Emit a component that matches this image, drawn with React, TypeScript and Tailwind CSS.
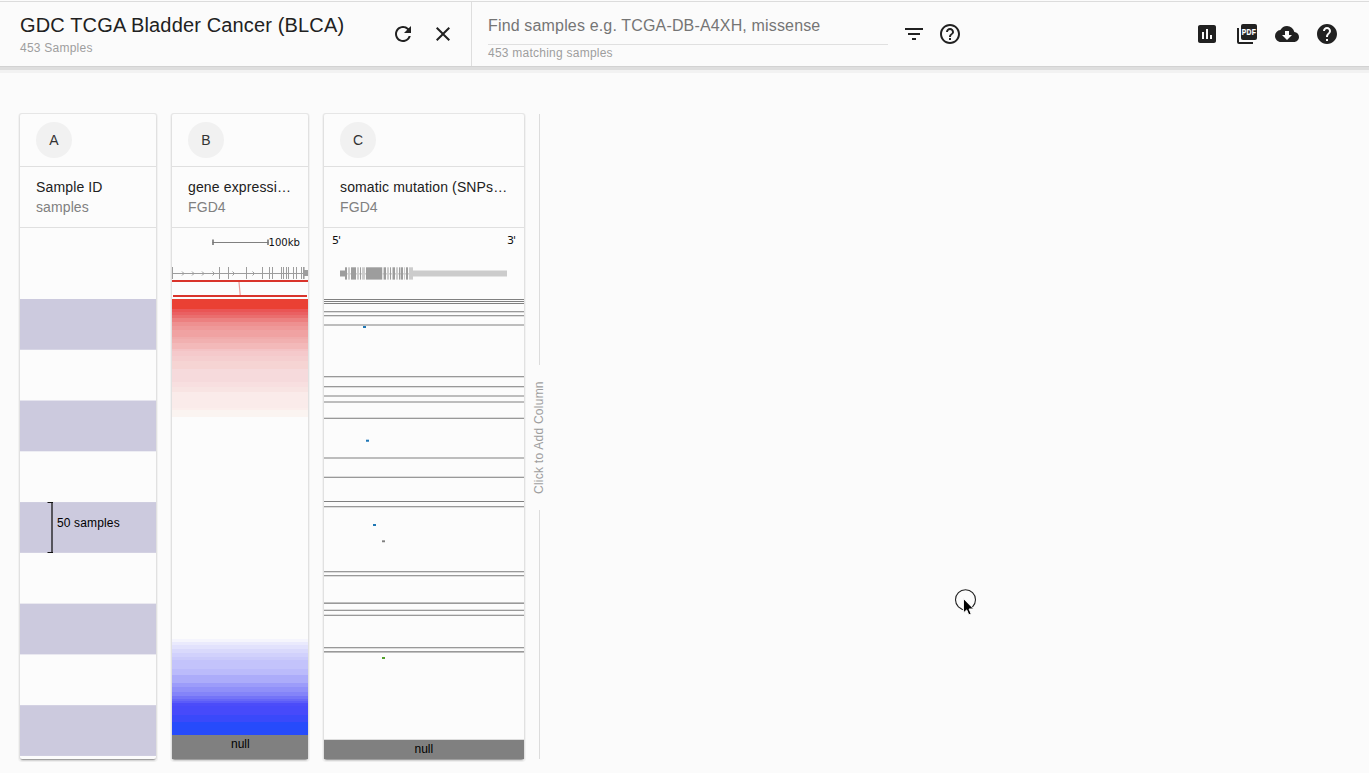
import type { ReactNode } from "react";
import {
  MdRefresh,
  MdClose,
  MdFilterList,
  MdHelpOutline,
  MdAssessment,
  MdCloudDownload,
  MdHelp,
} from "react-icons/md";

type Band = [from: number, to: number, fill: string];

const expressionBands: Band[] = [
  [71, 81, "#ea4033"],
  [81, 84, "#ea5555"],
  [84, 87, "#ea6062"],
  [87, 90, "#ea6e6e"],
  [90, 94, "#ec8080"],
  [94, 98, "#ee9090"],
  [98, 102, "#ef9999"],
  [102, 109, "#f0a2a2"],
  [109, 111, "#f0abab"],
  [111, 115, "#f1b0b0"],
  [115, 121, "#f3b9b9"],
  [121, 123, "#f4c3c5"],
  [123, 128, "#f5c9cb"],
  [128, 133, "#f5cecf"],
  [133, 141, "#f6d4d3"],
  [141, 154, "#f6dadc"],
  [154, 159, "#f8dfe0"],
  [159, 164, "#f8e4e3"],
  [164, 180, "#faebea"],
  [180, 182, "#fbeeec"],
  [182, 189, "#fbf4f1"],
  [411, 414, "#f5f5fd"],
  [414, 417, "#eaeafd"],
  [417, 421, "#e2e2fd"],
  [421, 425, "#d9d9fc"],
  [425, 429, "#d1d1fc"],
  [429, 432, "#cacafb"],
  [432, 441, "#c3c3fb"],
  [441, 447, "#bbbbfb"],
  [447, 455, "#acacfa"],
  [455, 459, "#9c9cfa"],
  [459, 464, "#9090f9"],
  [464, 468, "#8484f9"],
  [468, 471, "#7474f8"],
  [471, 473, "#6767f8"],
  [473, 475, "#5b5bf9"],
  [475, 478, "#4c4cf9"],
  [478, 487, "#474afa"],
  [487, 494, "#3a49fa"],
  [494, 507, "#264bfb"],
  [507, 531, "#808080"],
];

const expressionExons = [0, 47, 56, 74, 90, 97, 100, 109, 111, 114, 116, 121, 124, 129];
const chevrons = [10, 20, 30, 40.5, 60.5, 80.5];

const mutationExons: [x: number, width: number, fill: string][] = [
  [21, 2, "#9d9d9d"],
  [24, 2, "#cccccc"],
  [27, 5, "#9d9d9d"],
  [33, 2, "#cccccc"],
  [36, 1, "#9d9d9d"],
  [38, 3, "#cccccc"],
  [42, 16, "#9d9d9d"],
  [58, 0.7, "#dddddd"],
  [59.6, 2.4, "#9d9d9d"],
  [63, 2, "#cccccc"],
  [66, 1, "#9d9d9d"],
  [68, 1, "#cccccc"],
  [69, 2, "#9d9d9d"],
  [72, 2, "#cccccc"],
  [75, 1, "#9d9d9d"],
  [76.6, 2.4, "#9d9d9d"],
  [80, 1, "#cccccc"],
  [82, 2, "#9d9d9d"],
  [85, 4, "#cccccc"],
];

const mutationRows: [y: number, height: number, fill: string][] = [
  [71, 1, "#808080"],
  [73, 1, "#808080"],
  [75, 1, "#808080"],
  [83, 1, "#999999"],
  [84, 1, "#dddddd"],
  [87, 1, "#999999"],
  [88, 1, "#dddddd"],
  [96, 2, "#bdbdbd"],
  [148, 1, "#999999"],
  [149, 1, "#dddddd"],
  [158, 1, "#999999"],
  [159, 1, "#dddddd"],
  [167, 2, "#bdbdbd"],
  [173, 2, "#bdbdbd"],
  [189, 1, "#dddddd"],
  [190, 1, "#999999"],
  [229, 2, "#bdbdbd"],
  [248, 1, "#dddddd"],
  [249, 1, "#999999"],
  [273, 1, "#808080"],
  [278, 1, "#999999"],
  [279, 1, "#dddddd"],
  [343, 1, "#999999"],
  [344, 1, "#dddddd"],
  [347, 1, "#999999"],
  [348, 1, "#dddddd"],
  [374, 1, "#c0c0c0"],
  [375, 1, "#999999"],
  [381, 1, "#dddddd"],
  [382, 1, "#999999"],
  [386, 1, "#dddddd"],
  [387, 1, "#999999"],
  [419, 1, "#999999"],
  [420, 1, "#dddddd"],
  [423, 1, "#999999"],
  [424, 1, "#c0c0c0"],
  [511, 1, "#dddddd"],
  [512, 19, "#808080"],
];

const mutationMarks: [x: number, y: number, height: number, fill: string][] = [
  [39, 98, 2, "#1f77b4"],
  [42, 211, 1, "#b7d2e8"],
  [42, 212, 1, "#1f77b4"],
  [42, 213, 1, "#5a9acb"],
  [49, 296, 2, "#1f77b4"],
  [58, 312, 1, "#a8a8a8"],
  [58, 313, 1, "#808080"],
  [58, 314, 1, "#dddddd"],
  [58, 429, 2, "#52a02c"],
];

function PdfIcon() {
  return (
    <svg width="24" height="24" viewBox="0 0 24 24">
      <path d="M2 6h2v14h14v2H4a2 2 0 0 1-2-2z" fill="currentColor" />
      <rect x="6" y="2" width="16" height="16" rx="2" fill="currentColor" />
      <text
        transform="translate(6.8 13) scale(0.78 1)"
        fontSize="8.6"
        fontWeight="700"
        fill="#fff"
        stroke="#fff"
        strokeWidth="0.2"
        letterSpacing="0.4"
      >
        PDF
      </text>
    </svg>
  );
}

function SamplesChart() {
  return (
    <svg width="136" height="531" className="block">
      {[0, 2, 4, 6, 8].map((i) => (
        <rect key={i} x="0" y={71 + i * 50.77} width="136" height="50.77" fill="#cccade" />
      ))}
      <rect x="31" y="274" width="2" height="51" fill="#55545c" />
      <path d="M27.5 274.5H33M27.5 324.5H33" stroke="#111" fill="none" />
      <text x="37" y="299" fontSize="12" letterSpacing="0.14" fill="#000">
        50 samples
      </text>
    </svg>
  );
}

function ExpressionChart() {
  return (
    <svg width="136" height="531" className="block">
      <path d="M40.5 14.5H96.5" stroke="#808080" />
      <path d="M41 11.5V17M96 11.5V17" stroke="#777" strokeWidth="1.6" />
      <text
        x="96.5"
        y="18"
        fontSize="11"
        fontFamily="'DejaVu Sans', sans-serif"
        fill="#111"
        textLength="31.5"
        lengthAdjust="spacingAndGlyphs"
      >
        100kb
      </text>
      <path d="M0 45.5H136" stroke="#9d9d9d" />
      {expressionExons.map((x) => (
        <rect key={x} x={x} y="39" width="1" height="12" fill="#9d9d9d" />
      ))}
      <rect x="131" y="39" width="1.6" height="12" fill="#9d9d9d" />
      <rect x="132" y="42" width="4" height="6" fill="#9d9d9d" />
      {chevrons.map((x) => (
        <path key={x} d={`M${x} 43.5l2 2l-2 2`} stroke="#9d9d9d" strokeWidth="1" fill="none" />
      ))}
      <rect x="0" y="52" width="136" height="2" fill="#d9342b" />
      <path d="M67 54L68.2 67" stroke="#eb9c98" strokeWidth="1.2" />
      <rect x="1" y="67" width="134" height="2" fill="#d9342b" />
      {expressionBands.map(([from, to, fill]) => (
        <rect key={from} x="0" y={from} width="136" height={to - from} fill={fill} />
      ))}
      <text x="68.3" y="520" fontSize="12" textAnchor="middle" fill="#000">
        null
      </text>
    </svg>
  );
}

function MutationChart() {
  return (
    <svg width="200" height="531" className="block">
      <g fontSize="11" fontFamily="'DejaVu Sans', sans-serif" fill="#111">
        <text x="8" y="16" textLength="9">5'</text>
        <text x="183" y="16" textLength="9">3'</text>
      </g>
      <rect x="21" y="45" width="70" height="1.6" fill="#d4d4d4" />
      <rect x="16" y="42.5" width="5" height="6" fill="#9d9d9d" />
      <rect x="89" y="42.5" width="94" height="6" fill="#cccccc" />
      {mutationExons.map(([x, width, fill]) => (
        <rect key={x} x={x} y="39.3" width={width} height="12.3" fill={fill} />
      ))}
      {mutationRows.map(([y, height, fill]) => (
        <rect key={y} x="0" y={y} width="200" height={height} fill={fill} />
      ))}
      {mutationMarks.map(([x, y, height, fill]) => (
        <rect key={y} x={x} y={y} width="3" height={height} fill={fill} />
      ))}
      <text x="99.8" y="525" fontSize="12" textAnchor="middle" fill="#000">
        null
      </text>
    </svg>
  );
}

interface ColumnProps {
  label: string;
  title: string;
  subtitle: string;
  wide?: boolean;
  children: ReactNode;
}

function Column({ label, title, subtitle, wide, children }: ColumnProps) {
  return (
    <section
      className={`${wide ? "w-[200px]" : "w-[136px]"} shrink-0 rounded-[2px] bg-[#fcfcfc] shadow-[0_2px_2px_-1px_rgba(0,0,0,0.42),0_0_0_1px_#e6e6e6,0_1px_0_2px_#f2f2f2]`}
    >
      <div className="flex h-[53px] items-center border-b border-[#e0e0e0] px-4">
        <span className="flex size-9 items-center justify-center rounded-full bg-[#f1f1f1] text-[14px] text-[#333]">
          {label}
        </span>
      </div>
      <div className="h-[61px] border-b border-[#e0e0e0] px-4 pt-[10px] text-[14px] leading-5">
        <h2 className="tracking-[0.14px] whitespace-nowrap text-[#212121]">{title}</h2>
        <p className="tracking-[0.1px] text-[#808080]">{subtitle}</p>
      </div>
      {children}
    </section>
  );
}

export default function App() {
  return (
    <div className="h-[773px] w-[1369px] overflow-hidden bg-[#fbfbfb] pt-px font-['Liberation_Sans',Arial,sans-serif] text-[#212121]">
      <header className="flex h-[65px] border-t border-[#dcdcdc] shadow-[0_1px_0_#d2d2d2,0_4px_0_#dedede,0_7px_0_#f2f2f2]">
        <div className="flex w-[472px] shrink-0 border-r border-[#dedede] pl-5">
          <div className="w-[371px] pt-[11px]">
            <h1 className="text-[20px] leading-6 tracking-[0.15px] whitespace-nowrap">GDC TCGA Bladder Cancer (BLCA)</h1>
            <p className="mt-[3px] text-[12px] leading-4 tracking-[0.24px] text-[#9e9e9e]">453 Samples</p>
          </div>
          <div className="flex gap-4 pt-5">
            <MdRefresh size={24} />
            <MdClose size={24} />
          </div>
        </div>
        <div className="flex pl-4">
          <div className="w-[400px] pt-[11px]">
            <div className="h-8 border-b border-[#e0e0e0] pt-px text-[16px] leading-6 tracking-[0.16px] text-[#757575]">
              Find samples e.g. TCGA-DB-A4XH, missense
            </div>
            <p className="text-[12px] leading-4 tracking-[0.24px] text-[#9e9e9e]">453 matching samples</p>
          </div>
          <div className="flex gap-3 pt-5 pl-[14px]">
            <MdFilterList size={24} />
            <MdHelpOutline size={24} />
          </div>
        </div>
        <div className="ml-auto flex gap-4 pt-5 pr-[30px]">
          <MdAssessment size={24} />
          <PdfIcon />
          <MdCloudDownload size={24} />
          <MdHelp size={24} />
        </div>
      </header>

      <main className="flex items-start gap-4 pt-12 pl-5">
        <Column label="A" title="Sample ID" subtitle="samples">
          <SamplesChart />
        </Column>
        <Column label="B" title="gene expressi…" subtitle="FGD4">
          <ExpressionChart />
        </Column>
        <Column label="C" title="somatic mutation (SNPs…" subtitle="FGD4" wide>
          <MutationChart />
        </Column>
        <div className="-ml-[9px] flex h-[645px] w-4 flex-col items-center">
          <div className="h-[251px] w-px bg-[#dcdcdc]" />
          <div className="flex h-[145px] rotate-180 items-center justify-center text-[12px] leading-4 tracking-[0.25px] whitespace-nowrap text-[#9e9e9e] [writing-mode:vertical-rl]">
            Click to Add Column
          </div>
          <div className="w-px flex-1 bg-[#dcdcdc]" />
        </div>
      </main>

      <svg className="pointer-events-none absolute top-[585px] left-[950px]" width="30" height="35">
        <circle cx="15.5" cy="14.8" r="10" fill="none" stroke="#222" strokeWidth="1.1" />
        <path
          d="M13.4 13.5V28l3.3-3.1 2.1 5 2.4-1-2.1-4.9h4.6z"
          fill="#000"
          stroke="#fff"
          strokeWidth="1"
        />
      </svg>
    </div>
  );
}
